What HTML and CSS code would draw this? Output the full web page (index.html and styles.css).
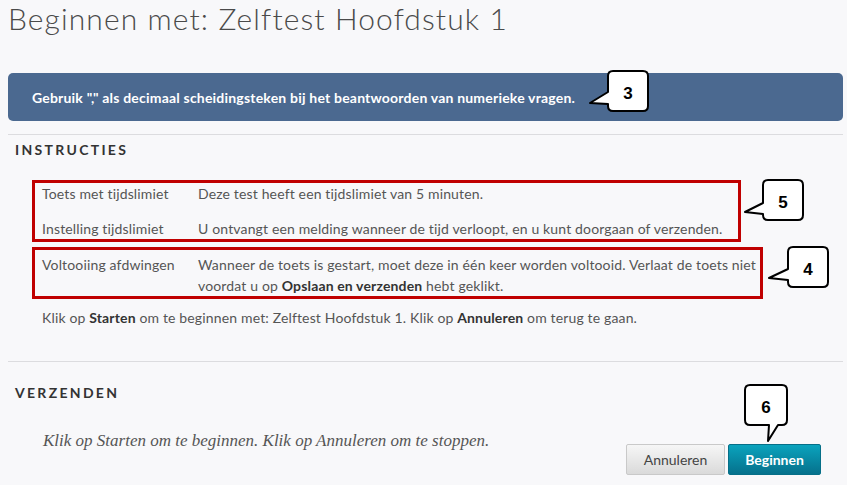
FILE: index.html
```html
<!DOCTYPE html>
<html>
<head lang="nl">
    <meta charset="UTF-8">
    <title>Beginnen met: Zelftest Hoofdstuk 1</title>
    <link rel="stylesheet" href="styles.css">
</head>
<body>
<div class="page">
    <h1 class="title">Beginnen met: Zelftest Hoofdstuk 1</h1>

    <div class="notice">Gebruik "," als decimaal scheidingsteken bij het beantwoorden van numerieke vragen.</div>

    <hr class="divider">
    <h2 class="section">Instructies</h2>

    <div class="group group-time">
        <div class="row">
            <span class="label">Toets met tijdslimiet</span>
            <span class="value">Deze test heeft een tijdslimiet van 5 minuten.</span>
        </div>
        <div class="row">
            <span class="label">Instelling tijdslimiet</span>
            <span class="value">U ontvangt een melding wanneer de tijd verloopt, en u kunt doorgaan of verzenden.</span>
        </div>
    </div>
    <div class="group group-finish">
        <div class="row">
            <span class="label">Voltooiing afdwingen</span>
            <span class="value">Wanneer de toets is gestart, moet deze in één keer worden voltooid. Verlaat de toets niet voordat u op <b>Opslaan en verzenden</b> hebt geklikt.</span>
        </div>
    </div>
    <p class="hint">Klik op <b>Starten</b> om te beginnen met: Zelftest Hoofdstuk 1. Klik op <b>Annuleren</b> om terug te gaan.</p>

    <hr class="divider divider-low">
    <h2 class="section section-low">Verzenden</h2>

    <div class="submit">
        <p class="submit-text">Klik op Starten om te beginnen. Klik op Annuleren om te stoppen.</p>
        <div class="buttons">
            <button class="btn btn-cancel" type="button">Annuleren</button>
            <button class="btn btn-start" type="button">Beginnen</button>
        </div>
    </div>

    <!-- genummerde ballonnen -->
    <svg class="callout callout-3" width="62" height="44" viewBox="0 0 62 44">
        <path d="M25,2 H55 Q60,2 60,7 V37 Q60,42 55,42 H25 Q20,42 20,37 V35 L2,34 L20,23 V7 Q20,2 25,2 Z"/>
        <text x="40" y="30">3</text>
    </svg>
    <svg class="callout callout-5" width="62" height="44" viewBox="0 0 62 44">
        <path d="M25,2 H55 Q60,2 60,7 V37 Q60,42 55,42 H25 Q20,42 20,37 V36 L2,34 L20,25 V7 Q20,2 25,2 Z"/>
        <text x="40" y="30">5</text>
    </svg>
    <svg class="callout callout-4" width="62" height="44" viewBox="0 0 62 44">
        <path d="M25,2 H55 Q60,2 60,7 V37 Q60,42 55,42 H25 Q20,42 20,37 V35 L1,33 L20,24 V7 Q20,2 25,2 Z"/>
        <text x="40" y="30">4</text>
    </svg>
    <svg class="callout callout-6" width="46" height="60" viewBox="0 0 46 60">
        <path d="M7,2 H39 Q44,2 44,7 V37 Q44,42 39,42 H35 L25,58 L26,42 H7 Q2,42 2,37 V7 Q2,2 7,2 Z"/>
        <text x="23" y="30">6</text>
    </svg>
</div>
</body>
</html>
```

FILE: styles.css
```css
body {
    margin: 0;
    background: #fff;
    font-family: Lato, "Liberation Sans", sans-serif;
}

.page {
    position: relative;
    height: 485px;
    padding: 0 4px 0 8px;
    box-sizing: border-box;
    background: #f8f8fa;
}

.title {
    margin: 0;
    font-size: 30px;
    font-weight: 300;
    line-height: 36px;
    letter-spacing: 1.1px;
    color: #4a4a4a;
}

.notice {
    display: flex;
    align-items: center;
    height: 48px;
    margin-top: 37px;
    padding-left: 24px;
    background: #4b6990;
    border-radius: 5px;
    color: #fff;
    font-size: 14px;
    font-weight: bold;
    letter-spacing: 0.2px;
}

.divider {
    margin: 13px 0 0;
    border: 0;
    border-top: 1px solid #dcdcdf;
}

.divider-low {
    margin-top: 33px;
}

.section {
    margin: 5px 0 20px;
    padding-left: 7px;
    font-size: 14px;
    font-weight: bold;
    line-height: 20px;
    letter-spacing: 2.3px;
    text-transform: uppercase;
    color: #333;
}

.section-low {
    margin-top: 21px;
    margin-bottom: 0;
}

.group {
    box-sizing: border-box;
    margin-left: 24px;
    border: 3px solid #c00000;
    padding-left: 7px;
}

.group-time {
    display: flex;
    flex-direction: column;
    gap: 14px;
    width: 709px;
}

.group-finish {
    width: 731px;
    margin-top: 5px;
    padding-top: 4px;
}

.row {
    display: flex;
    font-size: 14px;
    line-height: 21px;
    letter-spacing: 0.15px;
    color: #555;
}

.label {
    flex: none;
    width: 156px;
}

.row b, .hint b {
    color: #333;
}

.hint {
    margin: 8px 0 0 34px;
    font-size: 14px;
    line-height: 21px;
    letter-spacing: 0.15px;
    color: #555;
}

.submit {
    display: flex;
    justify-content: space-between;
    align-items: flex-start;
    margin-top: 26px;
    padding: 0 22px 0 35px;
}

.submit-text {
    margin: 0;
    font-family: "Liberation Serif", serif;
    font-style: italic;
    font-size: 17px;
    line-height: 24px;
    color: #555;
}

.buttons {
    display: flex;
    gap: 3px;
    margin-top: 15px;
}

.btn {
    height: 31px;
    padding: 0;
    border-radius: 2px;
    font-family: Lato, "Liberation Sans", sans-serif;
    font-size: 14px;
}

.btn-cancel {
    width: 99px;
    border: 1px solid #c9c9c9;
    background: linear-gradient(#f6f6f6, #dadada);
    color: #444;
}

.btn-start {
    width: 93px;
    border: 1px solid #066f88;
    background: linear-gradient(#0aa3bd, #06718c);
    color: #fff;
    font-weight: bold;
}

.callout {
    position: absolute;
    overflow: visible;
}

.callout path {
    fill: #fff;
    stroke: #000;
    stroke-width: 2;
    stroke-linejoin: round;
}

.callout text {
    font-family: "Liberation Sans", sans-serif;
    font-size: 17px;
    font-weight: bold;
    text-anchor: middle;
}

.callout-3 {
    left: 588px;
    top: 69px;
}

.callout-5 {
    left: 743px;
    top: 178px;
}

.callout-4 {
    left: 768px;
    top: 245px;
}

.callout-6 {
    left: 743px;
    top: 383px;
}
```
